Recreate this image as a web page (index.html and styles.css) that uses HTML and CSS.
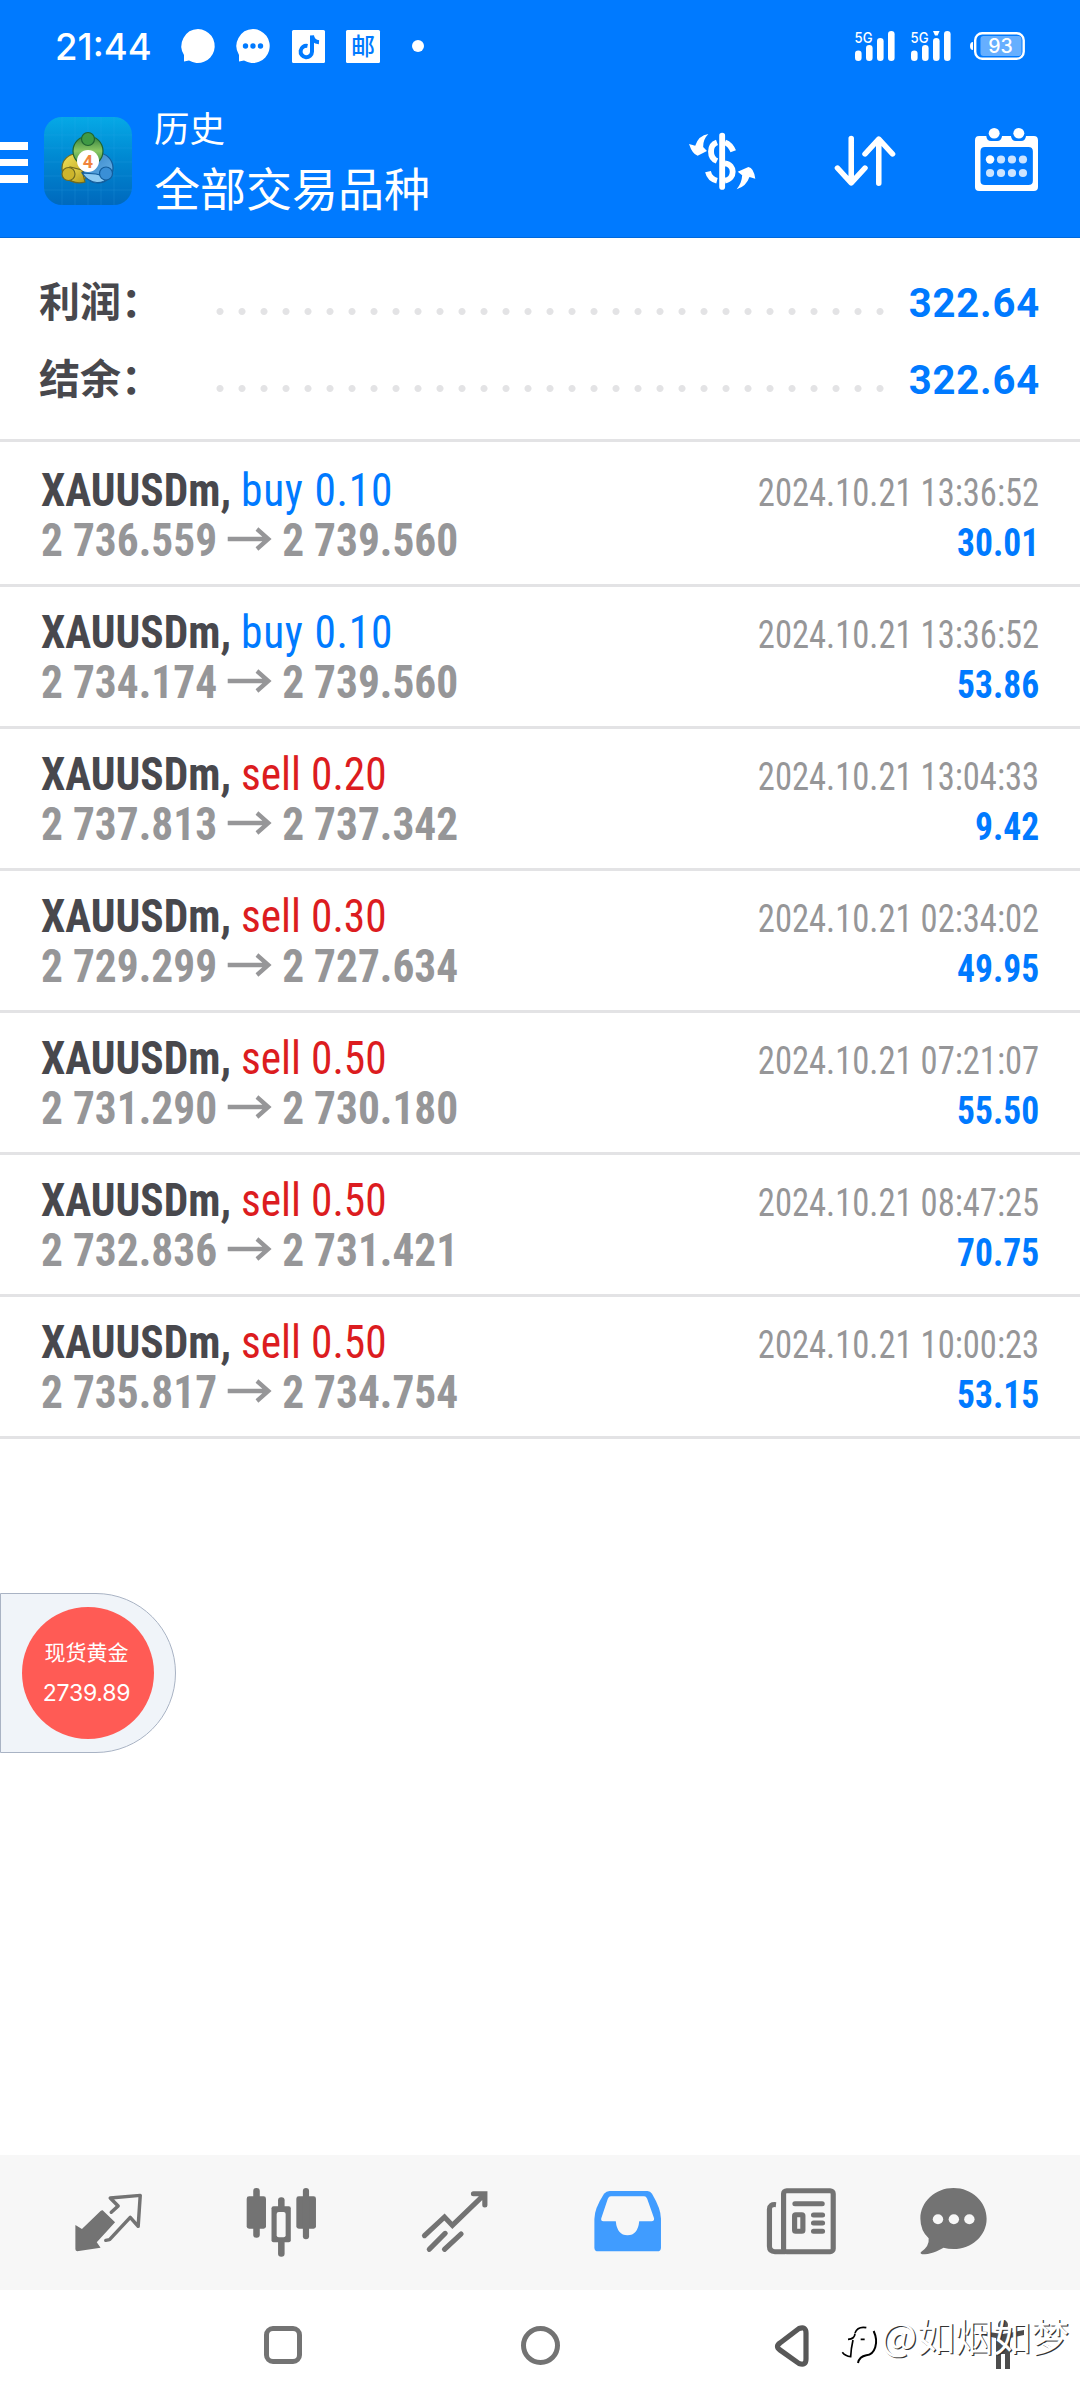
FILE: index.html
```html
<!DOCTYPE html>
<html lang="zh-CN">
<head>
<meta charset="utf-8">
<title>历史</title>
<link rel="stylesheet" href="styles.css">
</head>
<body>
<header class="top">
  <div class="status">
    <span class="clock">21:44</span>
    <svg class="s-bubble" viewBox="0 0 34 34"><path d="M17 0a17 17 0 1 1-9 31.600L3 32.500V26A17 17 0 0 1 17 0z" fill="#fff"/></svg>
    <svg class="s-bubble2" viewBox="0 0 34 34"><path d="M17 0a17 17 0 1 1-9 31.600L3 32.500V26A17 17 0 0 1 17 0z" fill="#fff"/><g fill="#007aff"><circle cx="9.500" cy="17" r="2.700"/><circle cx="17" cy="17" r="2.700"/><circle cx="24.500" cy="17" r="2.700"/></g></svg>
    <svg class="s-note" viewBox="0 0 33 33"><rect width="33" height="33" rx="1.500" fill="#fff"/><path d="M15.500 16a5.700 5.700 0 1 0 4.500 5.700V5.500c.5 4.500 3 6.500 7 6.800" fill="none" stroke="#007aff" stroke-width="4"/></svg>
    <svg class="s-mail" viewBox="0 0 34 33"><rect width="34" height="33" rx="1.500" fill="#fff"/><text x="17" y="25" text-anchor="middle" font-size="24" fill="#007aff">邮</text></svg>
    <i class="s-dot"></i>
    <svg class="s-sig" viewBox="0 0 40 30"><text x="-.5" y="11.500" font-size="15" textLength="18" lengthAdjust="spacingAndGlyphs">5G</text><g fill="#fff"><rect y="19.500" width="6.600" height="10.500" rx="3.300"/><rect x="11" y="14" width="6.600" height="16" rx="3.300"/><rect x="22" y="7" width="6.600" height="23" rx="3.300"/><rect x="33" width="6.600" height="30" rx="3.300"/></g></svg>
    <svg class="s-sig s-sig2" viewBox="0 0 40 30"><text x="-.5" y="11.500" font-size="15" textLength="18" lengthAdjust="spacingAndGlyphs">5G</text><g fill="#fff"><rect y="19.500" width="6.600" height="10.500" rx="3.300"/><rect x="11" y="14" width="6.600" height="16" rx="3.300"/><rect x="22" y="7" width="6.600" height="23" rx="3.300"/><rect x="33" width="6.600" height="30" rx="3.300"/><path d="M22 0h6.600l-2 4.500h-2.600z"/></g></svg>
    <svg class="s-bat" viewBox="0 0 55 28"><path d="M3 10Q0 10 0 14t3 4z" fill="#fff"/><rect x="5.200" y="1.200" width="48.500" height="25.600" rx="7" fill="none" stroke="#fff" stroke-width="2.400"/><rect x="10.500" y="4" width="41" height="20" rx="3" fill="#66afff"/><text x="30.500" y="21" font-size="19.500" text-anchor="middle">93</text></svg>
  </div>
  <div class="bar">
    <div class="menu"><i></i><i></i><i></i></div>
    <svg class="app" viewBox="0 0 88 88">
      <defs>
        <linearGradient id="bg" x2="0" y2="1"><stop offset="0" stop-color="#06a9e6"/><stop offset=".45" stop-color="#0089d2"/><stop offset="1" stop-color="#0069bd"/></linearGradient>
        <linearGradient id="gr" x2="0" y2="1"><stop offset="0" stop-color="#2f7d3c"/><stop offset=".5" stop-color="#8cc864"/><stop offset="1" stop-color="#2c8a3f"/></linearGradient>
        <linearGradient id="ye" x2="1" y2="1"><stop offset="0" stop-color="#f3e35a"/><stop offset="1" stop-color="#b39a18"/></linearGradient>
        <linearGradient id="bl" x2="1" y2="1"><stop offset="0" stop-color="#2c7cc4"/><stop offset="1" stop-color="#6fb8ea"/></linearGradient>
      </defs>
      <rect width="88" height="88" rx="18" fill="url(#bg)"/>
      <path d="M18 0v88M31 0v88M44 0v88M57 0v88M70 0v88M0 18h88M0 31h88M0 45h88M0 59h88M0 73h88" stroke="#3cb4f0" stroke-opacity=".16" fill="none"/>
      <g stroke-width="1.200">
        <circle cx="32" cy="51" r="14" fill="url(#ye)" stroke="#6f6a20"/>
        <circle cx="54" cy="51" r="15" fill="url(#bl)" stroke="#135d9c"/>
        <circle cx="44" cy="34" r="15" fill="url(#gr)" stroke="#1f6430"/>
        <path d="M22 60Q30 68 41 65L38 53 26 50z" fill="url(#ye)" stroke="#6f6a20"/>
        <path d="M64 60c-4 7-17 9-26-4l14 1z" fill="#8ccaf2" stroke="#135d9c"/>
        <circle cx="44" cy="22" r="6.500" fill="#3f9a45" stroke="#1f6430"/>
        <circle cx="24.500" cy="57" r="6.500" fill="#cdb52c" stroke="#6f6a20"/>
        <circle cx="62" cy="56.500" r="6.500" fill="#3a8fd6" stroke="#135d9c"/>
      </g>
      <circle cx="44" cy="44" r="11" fill="#fff"/>
      <text x="44" y="50.500" font-size="18" font-weight="700" fill="#f0843c" text-anchor="middle">4</text>
    </svg>
    <div class="titles"><div class="t1">历史</div><div class="t2">全部交易品种</div></div>
    <svg class="i-money" viewBox="432 398 194 171" preserveAspectRatio="none">
      <g fill="none" stroke="#fff" stroke-width="17"><path d="M528 406V560" stroke-linecap="round"/><path d="M513 426C490 434 490 472 513 482M487 514Q492 536 513 541M536 426Q552 432 560 453M536 489C566 492 566 536 536 541"/></g>
      <path d="M432 431L450 436Q460 405 488 401Q472 418 473 440L484 452L457 466Q442 462 432 431zM624 535L607 530Q598 558 570 567Q585 548 586 525L573 514L604 500Q619 502 624 535z" fill="#fff"/>
    </svg>
    <svg class="i-sort" viewBox="854 405 180 156" preserveAspectRatio="none"><path d="M904 415V546M864 504L904 549L944 504M984 550V420M944 462L984 417L1024 462" fill="none" stroke="#fff" stroke-width="16" stroke-linecap="round" stroke-linejoin="round"/></svg>
    <svg class="i-cal" viewBox="1263 384 184 190" preserveAspectRatio="none">
      <path fill-rule="evenodd" fill="#fff" d="M1275 408H1296Q1297 423 1310 423H1328Q1340 423 1342 408H1368Q1370 423 1382 423H1398Q1410 423 1412 408H1435Q1447 408 1447 421V562Q1447 574 1435 574H1275Q1263 574 1263 562V421Q1263 408 1275 408zM1292 441Q1279 441 1279 454V543Q1279 556 1292 556H1419Q1432 556 1432 543V454Q1432 441 1419 441z"/>
      <g fill="#fff"><circle cx="1319" cy="400" r="16"/><circle cx="1391" cy="400" r="16"/><circle cx="1307" cy="479" r="12.500"/></g>
      <g fill="#cce4ff"><circle cx="1339" cy="479" r="12"/><circle cx="1371" cy="479" r="12"/><circle cx="1403" cy="479" r="12"/><circle cx="1307" cy="520" r="12"/><circle cx="1339" cy="520" r="12"/><circle cx="1371" cy="520" r="12"/><circle cx="1403" cy="520" r="12"/></g>
    </svg>
  </div>
</header>
<section class="summary">
  <div class="sum"><span class="label">利润：</span><i class="dots"></i><b>322.64</b></div>
  <div class="sum"><span class="label">结余：</span><i class="dots"></i><b>322.64</b></div>
</section>
<main class="deals">
  <div class="deal"><div class="l"><p><b class="sym">XAUUSDm,</b> <span class="buy">buy 0.10</span></p><p class="pr"><b>2 736.559</b><svg class="arr" viewBox="0 0 46 24"><path d="M0 12H44M31 2L43 12L31 22"/></svg><b>2 739.560</b></p></div><div class="r"><p class="date">2024.10.21 13:36:52</p><p class="amt">30.01</p></div></div>
  <div class="deal"><div class="l"><p><b class="sym">XAUUSDm,</b> <span class="buy">buy 0.10</span></p><p class="pr"><b>2 734.174</b><svg class="arr" viewBox="0 0 46 24"><path d="M0 12H44M31 2L43 12L31 22"/></svg><b>2 739.560</b></p></div><div class="r"><p class="date">2024.10.21 13:36:52</p><p class="amt">53.86</p></div></div>
  <div class="deal"><div class="l"><p><b class="sym">XAUUSDm,</b> <span class="sell">sell 0.20</span></p><p class="pr"><b>2 737.813</b><svg class="arr" viewBox="0 0 46 24"><path d="M0 12H44M31 2L43 12L31 22"/></svg><b>2 737.342</b></p></div><div class="r"><p class="date">2024.10.21 13:04:33</p><p class="amt">9.42</p></div></div>
  <div class="deal"><div class="l"><p><b class="sym">XAUUSDm,</b> <span class="sell">sell 0.30</span></p><p class="pr"><b>2 729.299</b><svg class="arr" viewBox="0 0 46 24"><path d="M0 12H44M31 2L43 12L31 22"/></svg><b>2 727.634</b></p></div><div class="r"><p class="date">2024.10.21 02:34:02</p><p class="amt">49.95</p></div></div>
  <div class="deal"><div class="l"><p><b class="sym">XAUUSDm,</b> <span class="sell">sell 0.50</span></p><p class="pr"><b>2 731.290</b><svg class="arr" viewBox="0 0 46 24"><path d="M0 12H44M31 2L43 12L31 22"/></svg><b>2 730.180</b></p></div><div class="r"><p class="date">2024.10.21 07:21:07</p><p class="amt">55.50</p></div></div>
  <div class="deal"><div class="l"><p><b class="sym">XAUUSDm,</b> <span class="sell">sell 0.50</span></p><p class="pr"><b>2 732.836</b><svg class="arr" viewBox="0 0 46 24"><path d="M0 12H44M31 2L43 12L31 22"/></svg><b>2 731.421</b></p></div><div class="r"><p class="date">2024.10.21 08:47:25</p><p class="amt">70.75</p></div></div>
  <div class="deal"><div class="l"><p><b class="sym">XAUUSDm,</b> <span class="sell">sell 0.50</span></p><p class="pr"><b>2 735.817</b><svg class="arr" viewBox="0 0 46 24"><path d="M0 12H44M31 2L43 12L31 22"/></svg><b>2 734.754</b></p></div><div class="r"><p class="date">2024.10.21 10:00:23</p><p class="amt">53.15</p></div></div>
</main>
<aside class="float"><div class="disc"><span class="f1">现货黄金</span><span class="f2">2739.89</span></div></aside>
<nav class="tabs">
  <svg class="n1" viewBox="215 140 200 210" preserveAspectRatio="none"><path d="M298 210L334 246L281 306L292 322L224 333Q219 332 219 326V254L238 266L292 212Q296 209 298 210z" fill="#737373"/><path d="M323 216L343 197L320 173L407 165L401 258L378 231L318 298L307 300" fill="none" stroke="#737373" stroke-width="10" stroke-linejoin="round" stroke-linecap="round"/></svg>
  <svg class="n2" viewBox="714 140 206 210" preserveAspectRatio="none"><g fill="#737373"><rect x="716" y="168" width="56" height="97" rx="7"/><rect x="735" y="143" width="19" height="149" rx="9"/><rect x="860" y="168" width="57" height="97" rx="7"/><rect x="879" y="143" width="18" height="154" rx="9"/><rect x="788" y="198" width="56" height="108" rx="6"/><rect x="807" y="171" width="19" height="178" rx="9"/></g><rect x="803" y="215" width="26" height="76" rx="6" fill="#f7f7f7"/></svg>
  <svg class="n3" viewBox="1218 140 200 210" preserveAspectRatio="none"><path d="M1231 286L1289 230L1312 255L1403 164M1373 160H1406V194M1245 327L1291 279M1289 327L1337 281" fill="none" stroke="#737373" stroke-width="15" stroke-linecap="round" stroke-linejoin="miter"/></svg>
  <svg class="n4" viewBox="154 140 200 210" preserveAspectRatio="none"><path d="M202 152H312Q320 152 325 160Q351 205 351 235V322Q351 333 340 333H169Q158 333 158 322V235Q158 205 186 160Q193 152 202 152z" fill="#409cff"/><path d="M206 168H302Q308 168 311 175L331 234Q332 243 324 243H288Q284 285 254 285T220 243H184Q176 243 178 234L197 175Q200 168 206 168z" fill="#f7f7f7"/></svg>
  <svg class="n5" viewBox="655 140 206 210" preserveAspectRatio="none"><g fill="none" stroke="#737373" stroke-width="15"><rect x="706" y="151" width="144" height="183" rx="9"/><path d="M684 193Q665 191 665 207V318Q665 334 681 334H712"/><path d="M739 190H818M793 224H819M793 248H819M793 273H819" stroke-linecap="round"/><rect x="738" y="223" width="24" height="50" rx="3"/></g></svg>
  <svg class="n6" viewBox="1099 140 200 210" preserveAspectRatio="none"><path d="M1199 143C1252 143 1295 184 1295 235C1295 286 1252 326 1199 326Q1183 326 1170 322C1153 333 1130 342 1108 342Q1102 341 1104 336Q1130 318 1127 294Q1103 270 1103 235C1103 184 1146 143 1199 143z" fill="#737373"/><g fill="#f7f7f7"><circle cx="1154" cy="237" r="15"/><circle cx="1200" cy="237" r="15"/><circle cx="1245" cy="237" r="15"/></g></svg>
</nav>
<footer class="sys">
  <i class="sq"></i><i class="ci"></i>
  <svg class="tri" viewBox="0 0 34 42"><path d="M5 18Q0 21.500 5 25L24 38.500Q31 41 31 34V8Q31 1 24 3.500z" fill="none" stroke="#585858" stroke-width="5.200"/></svg>
  <svg class="acc" viewBox="0 0 44 50"><circle cx="22" cy="5" r="5" fill="#555"/><path d="M0 11L22 14L43 10V15L29 18V49H24V34H20V49H15V18L0 15z" fill="#4d4d4d"/></svg>
</footer>
<div class="mark">
  <svg viewBox="65 108 108 114" class="swirl"><g fill="none" stroke="#000" stroke-width="5"><path d="M138 113Q112 108 104 129M104 131Q103 147 83 148M98 150Q92 176 91 200Q75 199 66 187M121 148H133" /><path d="M160 123C176 158 164 194 138 196Q117 200 113 219" stroke-width="6"/></g></svg>
  <span>@如烟如梦</span>
</div>
</body>
</html>
```
FILE: styles.css
```css
* { box-sizing: border-box; }
body { margin: 0; width: 1080px; height: 2400px; background: #fff; display: flex; flex-direction: column; position: relative; overflow: hidden; font-family: Roboto, "Noto Sans CJK SC", sans-serif; }
p { margin: 0; }
svg { display: block; flex: none; overflow: visible; }
.top { height: 238px; background: #007aff; border-bottom: 1px solid #0069dc; color: #fff; flex: none; }
.status { height: 94px; display: flex; align-items: flex-start; padding: 29px 55px 0 55px; }
.status text { font-family: Inter, "Noto Sans CJK SC", sans-serif; fill: #fff; font-weight: 500; }
.status .s-mail text { fill: #007aff; }
.clock { width: 126px; font: 500 36.500px/36px Inter, sans-serif; }
.s-bubble, .s-bubble2 { width: 34px; height: 34px; }
.s-bubble2 { margin-left: 21px; }
.s-note { width: 33px; height: 33px; margin: 1px 0 0 22px; }
.s-mail { width: 34px; height: 33px; margin: 1px 0 0 21px; }
.s-dot { width: 12px; height: 12px; border-radius: 50%; background: #fff; margin: 11px 0 0 32px; }
.s-sig { width: 40px; height: 30px; margin: 2px 0 0 auto; }
.s-sig2 { margin-left: 16px; }
.s-bat { width: 55px; height: 28px; margin: 3px 0 0 19px; }
.bar { height: 143px; display: flex; align-items: flex-start; }
.menu { width: 28px; display: grid; gap: 9px; padding-top: 48px; }
.menu i { height: 7.500px; background: #fff; }
.app { width: 88px; height: 88px; margin: 23px 0 0 16px; }
.titles { margin-left: 22px; width: 535px; font-family: "Noto Sans CJK SC", sans-serif; padding-top: 13px; }
.t1 { font-size: 35.500px; line-height: 40px; }
.t2 { font-size: 46px; line-height: 58px; margin-top: 10px; white-space: nowrap; }
.i-money { width: 67px; height: 57px; margin-top: 39px; }
.i-sort { width: 62px; height: 52px; margin: 41px 0 0 78px; }
.i-cal { width: 63px; height: 63px; margin: 34px 0 0 79px; }
.summary { padding: 27px 40px 20px; height: 204px; border-bottom: 3px solid #e3e3e5; flex: none; margin-bottom: 3px; }
.sum { height: 77px; display: flex; line-height: 77px; }
.label { width: 169.500px; margin-left: -1px; color: #48484d; font: 700 41px/69px "Noto Sans CJK SC", sans-serif; }
.dots { width: 682px; background: radial-gradient(circle at 11px 46.500px, #e3e3e5 3px, transparent 4px) 0 0 / 22px 77px repeat-x; }
.sum b { margin-left: auto; font-size: 40px; letter-spacing: .8px; color: #007aff; }
.deals { font-family: "Roboto Condensed", Roboto, sans-serif; font-stretch: 75%; }
.deal { height: 142px; border-bottom: 3px solid #e3e3e5; padding: 20px 41px 0 41px; display: flex; justify-content: space-between; font-size: 46px; line-height: 50px; white-space: nowrap; }
.l { transform: scaleX(.943); transform-origin: left; }
.sym { color: #48484d; }
.buy, .amt { color: #007aff; }
.buy { letter-spacing: .8px; }
.sell { color: #dc1c20; }
.pr { display: flex; color: #969698; }
.arr { width: 46px; height: 24px; margin: 12px 12px 0 11px; }
.arr path { fill: none; stroke: #969698; stroke-width: 4.500; }
.r { padding-top: 3px; font-size: 38px; text-align: right; }
.date { color: #969698; transform: scaleX(.91); transform-origin: right; }
.amt { font-weight: 700; transform: scaleX(.935); transform-origin: right; }
.float { position: absolute; left: 0; top: 1593px; width: 176px; height: 160px; border: 1px solid #a9b3c4; border-radius: 0 80px 80px 0; background: #f0f4f9; padding: 13px 0 0 21px; }
.disc { width: 132px; height: 132px; border-radius: 50%; background: #ff5b55; color: #fff; display: flex; flex-direction: column; align-items: center; padding: 28px 3px 0 0; }
.f1 { font: 21px/32px "Noto Sans CJK SC", sans-serif; }
.f2 { font: 23px/32px Inter, sans-serif; margin-top: 10px; letter-spacing: -.2px; }
.tabs { margin-top: auto; height: 135px; background: #f7f7f7; display: flex; padding: 32px 0 0 74px; flex: none; }
.tabs svg { width: 69px; height: 70px; }
.tabs .n2 { width: 71px; margin-left: 103px; }
.tabs .n3 { margin-left: 102.500px; }
.tabs .n4 { margin-left: 104.500px; }
.tabs .n5 { width: 71px; margin-left: 103.500px; }
.tabs .n6 { margin-left: 82px; }
.sys { height: 110px; display: flex; flex: none; padding: 36px 0 0 264px; }
.sq { width: 38px; height: 38px; border: 5.500px solid #737373; border-radius: 9px; }
.ci { width: 39px; height: 39px; border: 5px solid #737373; border-radius: 50%; margin-left: 219px; }
.tri { width: 34px; height: 42px; margin: -1px 0 0 215px; }
.acc { width: 44px; height: 50px; margin: -6px 0 0 172px; }
.mark { position: absolute; left: 842px; top: 2309px; display: flex; }
.swirl { width: 36px; height: 38px; margin: 17px 3px 0 0; }
.mark span { font: 38px/52px "Noto Sans CJK SC", sans-serif; color: #fff; text-shadow: 1.200px 1.200px 0 #333; }
```
